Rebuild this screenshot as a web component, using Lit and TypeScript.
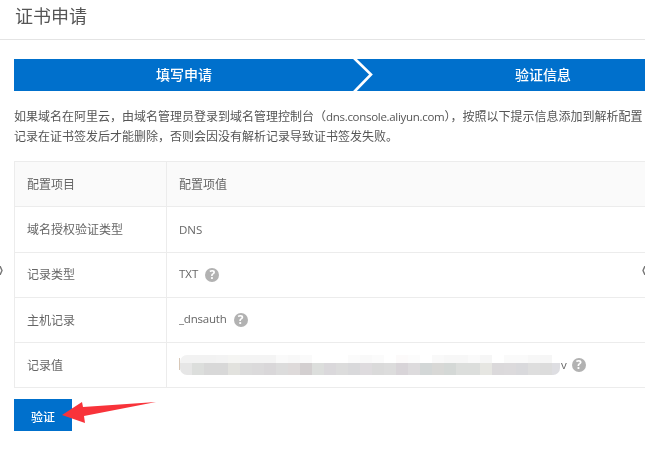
import { LitElement, html, css, svg } from "lit";
import { customElement } from "lit/decorators.js";

const lower = ["#e6e6e6","#dcdedc","#d8d8d8","#d8d8d8","#e2e2de","#dcdcdc","#dbdadb","#d9d7d9","#dcdcdc","#dedada","#d3cfd0","#dcdedc","#dad8db","#dcdcdc","#d9d9db","#dedbde","#dadada","#dcdcdc","#d8d4d8","#dddbdd","#d3d7d7","#d8d8d6","#d4d8d6","#dcdedc","#dcdedc","#e6e6e2","#dbd9db","#dcdadc","#d9d9dc","#dedede","#dcdcdc","#dedee2"];
const upper = ["#f2f2f2","#f2f2f2","#f2f2f2","#f3f3f3","#f5f5f3","#f4f4f4","#f4f4f4","#f4f4f4","#fafafa","#f8f8f8","#fafafa","#ffffff","#ffffff","#ffffff","#fbfbfb","#f9f9f9","#fbfbfb","#ffffff","#fcfafa","#fcfcfc","#ffffff","#f9f9f9","#f7f7f7","#f7f7f7","#fafafa","#f6f6f6","#ffffff","#fafafa","#fafafa","#f7f7f7","#f6f6f6","#ffffff"];

const row = (k: string, v: unknown) => html`<tr><td class="k">${k}</td><td class="v">${v}</td></tr>`;
const q = html`<span class="q">?</span>`;

@customElement("app-root")
export class AppRoot extends LitElement {
  static styles = css`
    :host {
      display: block;
      position: relative;
      width: 645px;
      height: 461px;
      overflow: hidden;
      background: #fff;
      font-family: "Noto Sans CJK SC", sans-serif;
      font-size: 12px;
      color: #666;
    }
    .page { filter: blur(0.35px); height: 461px; }
    .head {
      height: 39px;
      padding-left: 15px;
      font-size: 18px;
      line-height: 31px;
      color: #555;
      border-bottom: 1px solid #e4e4e4;
    }
    .steps {
      display: flex;
      margin: 19px 0 0 14px;
      width: 700px;
      height: 32px;
      background: #0070cc;
      color: #fff;
      font-size: 14px;
      font-weight: 500;
      line-height: 31px;
      text-align: center;
    }
    .step1 { width: 340px; flex: none; }
    .step2 { width: 342px; flex: none; }
    .chev { width: 18px; height: 32px; flex: none; display: block; overflow: visible; }
    .intro {
      margin: 15px 0 0 14px;
      line-height: 20px;
      white-space: nowrap;
      color: #555;
    }
    .intro > div { height: 20px; }
    .lat { font-family: "Open Sans", sans-serif; font-size: 11.5px; line-height: 1; }
    .url { letter-spacing: -0.3px; }
    .host { letter-spacing: -0.2px; }
    table {
      margin: 15px 0 0 14px;
      width: 700px;
      border-collapse: collapse;
      table-layout: fixed;
      border: 1px solid #ececec;
      border-right: none;
    }
    td {
      border: 1px solid #ececec;
      border-right: none;
      padding: 0 12px 2px;
      height: 45.3px;
      box-sizing: border-box;
      white-space: nowrap;
      color: #666;
    }
    td.k { width: 152px; }
    tr.th td { background: #fafafa; }
    .q {
      display: inline-block;
      flex: none;
      width: 14px;
      height: 14px;
      margin-left: 7px;
      margin-top: 2px;
      border-radius: 50%;
      background: #b2b2b2;
      color: #fff;
      font-family: "Open Sans", sans-serif;
      font-size: 12px;
      font-weight: 700;
      line-height: 14px;
      text-align: center;
    }
    .val { display: flex; align-items: center; }
    .val.last .q { margin-left: 5px; }
    .frag { width: 1px; height: 12px; background: #d8c8b8; flex: none; }
    .mosaic {
      display: flex;
      flex-direction: column;
      width: 380px;
      height: 20px;
      margin: 2px 1px 0 0;
      flex: none;
      border-radius: 7px;
      overflow: hidden;
    }
    .band { display: flex; flex: none; }
    .band.u { height: 8px; }
    .band.l { height: 12px; }
    .band span { width: 12px; flex: none; }
    .btn {
      display: block;
      margin: 11px 0 0 14px;
      width: 58px;
      height: 32px;
      border: 0;
      padding: 0;
      background: #0070cc;
      color: #fff;
      font: 500 12px/35px "Noto Sans CJK SC", sans-serif;
      text-align: center;
    }
    .arrow { position: absolute; left: 55px; top: 395px; width: 105px; height: 35px; }
    .edge { position: absolute; top: 266px; width: 4px; height: 9px; }
    .edge.l { left: 0; }
    .edge.r { right: 0; }
  `;

  render() {
    return html`
      <div class="page">
        <div class="head">证书申请</div>
        <div class="steps">
          <div class="step1">填写申请</div>
          <svg class="chev" viewBox="0 0 18 32">
            ${svg`<polyline points="0,-1 17,15.5 0,33" fill="none" stroke="#fff" stroke-width="2.6"/>`}
          </svg>
          <div class="step2">验证信息</div>
        </div>
        <div class="intro">
          <div>如果域名在阿里云，由域名管理员登录到域名管理控制台（<span class="lat url">dns.console.aliyun.com</span>），按照以下提示信息添加到解析配置</div>
          <div>记录在证书签发后才能删除，否则会因没有解析记录导致证书签发失败。</div>
        </div>
        <table>
          <tr class="th"><td class="k">配置项目</td><td class="v">配置项值</td></tr>
          ${row("域名授权验证类型", html`<span class="lat">DNS</span>`)}
          ${row("记录类型", html`<div class="val"><span class="lat">TXT</span>${q}</div>`)}
          ${row("主机记录", html`<div class="val"><span class="lat host">_dnsauth</span>${q}</div>`)}
          ${row("记录值", html`<div class="val last">
            <span class="frag"></span>
            <div class="mosaic">
              <div class="band u">${upper.map((c) => html`<span style="background:${c}"></span>`)}</div>
              <div class="band l">${lower.map((c) => html`<span style="background:${c}"></span>`)}</div>
            </div>
            <span class="lat">v</span>${q}
          </div>`)}
        </table>
        <button class="btn">验证</button>
      </div>
      <svg class="arrow" viewBox="55 395 105 35">
        ${svg`<polygon points="62,415 82,402 83,407 156,402 84,416 85,423" fill="#f8333a"/>`}
      </svg>
      <svg class="edge l" viewBox="0 0 4 9">${svg`<path d="M0 0 L2 4.5 L0 9" fill="none" stroke="#777" stroke-width="1.4"/>`}</svg>
      <svg class="edge r" viewBox="0 0 4 9">${svg`<path d="M4 0 L2 4.5 L4 9" fill="none" stroke="#777" stroke-width="1.4"/>`}</svg>
    `;
  }
}
